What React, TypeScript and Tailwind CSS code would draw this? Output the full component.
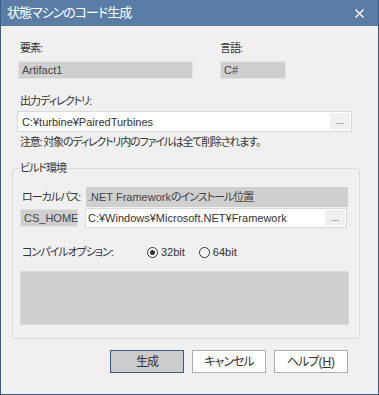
const font = { fontFamily: '"Liberation Sans", "Noto Sans CJK JP", sans-serif' }

function J({ children, className = '' }: { children: React.ReactNode; className?: string }) {
    return <span className={'tracking-[-1px] ' + className}>{children}</span>
}

function Radio({ checked, label }: { checked?: boolean; label: string }) {
    return (
        <div className="flex items-center gap-[3px]">
            <div className="w-[11px] h-[11px] rounded-full border border-[#333] bg-white flex items-center justify-center">
                {checked && <div className="w-[5px] h-[5px] rounded-full bg-[#333]" />}
            </div>
            <span>{label}</span>
        </div>
    )
}

function Browse() {
    return (
        <div className="w-[20px] self-stretch my-[1px] mr-[1px] bg-[#f0f0f0] flex items-center justify-center text-[9px] leading-none text-[#333]">
            ...
        </div>
    )
}

/**
 * State machine code generation dialog
 */
export default function App() {
    return (
        <div
            className="w-[379px] h-[395px] border border-[#3c5b82] border-t-0 bg-[#f0f0f0] flex flex-col text-[11px] leading-[16px] text-[#333] whitespace-nowrap [font-feature-settings:'palt']"
            style={font}
        >
            <div className="h-[26px] bg-[#5a7da6] flex items-center justify-between pl-[6px] pr-[14px] text-white text-[13px]">
                <J>状態マシンのコード生成</J>
                <svg width="9" height="9" viewBox="0 0 9 9" stroke="white" strokeWidth="1.4">
                    <path d="M0.5 0.5 L8.5 8.5 M8.5 0.5 L0.5 8.5" />
                </svg>
            </div>

            <div className="flex flex-col pl-[17px]">
                <div className="flex mt-[14px]">
                    <div className="flex flex-col w-[202px]">
                        <J className="pl-[2px]">要素:</J>
                        <div className="mt-[5px] w-[175px] h-[18px] bg-[#cfcfcf] border border-[#e4e4e4] flex items-center pl-[3px] text-[#444]">
                            Artifact1
                        </div>
                    </div>
                    <div className="flex flex-col">
                        <J>言語:</J>
                        <div className="mt-[5px] w-[66px] h-[18px] bg-[#cfcfcf] border border-[#e4e4e4] flex items-center pl-[3px] text-[#444]">
                            C#
                        </div>
                    </div>
                </div>

                <J className="mt-[14px] pl-[2px]">出力ディレクトリ:</J>
                <div className="mt-[2px] -ml-[1px] w-[335px] h-[21px] bg-white border border-[#d9d9d9] flex items-center">
                    <span className="flex-1 pl-[4px]">C:¥turbine¥PairedTurbines</span>
                    <Browse />
                </div>
                <span className="mt-[2px] pl-[2px] tracking-[-1.2px]">注意: 対象のディレクトリ内のファイルは全て削除されます。</span>
            </div>

            <fieldset className="mt-[10px] ml-[11px] w-[348px] border border-[#dcdcdc] rounded-[3px] pb-[13px]">
                <legend className="ml-[6px] px-[1px]">
                    <J>ビルド環境</J>
                </legend>
                <div className="flex items-center mt-[11px] pl-[9px] h-[20px]">
                    <J className="w-[64px]">ローカルパス:</J>
                    <div className="w-[262px] h-[20px] bg-[#cfcfcf] flex items-center pl-[2px] text-[#444]">
                        .NET Framework<J>のインストール位置</J>
                    </div>
                </div>
                <div className="flex items-center mt-[1px] pl-[7px] h-[20px]">
                    <div className="w-[58px] h-[18px] bg-[#cfcfcf] border border-[#e4e4e4] flex items-center pl-[3px] text-[#444]">
                        CS_HOME
                    </div>
                    <div className="ml-[7px] w-[262px] h-[20px] bg-white border border-[#d9d9d9] flex items-center">
                        <span className="flex-1 pl-[2px]">C:¥Windows¥Microsoft.NET¥Framework</span>
                        <Browse />
                    </div>
                </div>
                <div className="flex items-center mt-[16px] pl-[9px] h-[16px]">
                    <J className="w-[125px]">コンパイルオプション:</J>
                    <div className="flex items-center gap-[14px]">
                        <Radio checked label="32bit" />
                        <Radio label="64bit" />
                    </div>
                </div>
                <div className="mt-[11px] ml-[7px] w-[329px] h-[54px] bg-[#cfcfcf] border border-[#d9d9d9]" />
            </fieldset>

            <div className="flex justify-end gap-[8px] mt-[11px] pr-[30px] text-[12px]">
                <button className="w-[74px] h-[23px] bg-[#cccccc] border border-[#3c5b82]">
                    <J>生成</J>
                </button>
                <button className="w-[74px] h-[23px] bg-white border border-[#adadad]">
                    <J>キャンセル</J>
                </button>
                <button className="w-[74px] h-[23px] bg-white border border-[#adadad]">
                    <J>ヘルプ</J>(<span className="underline">H</span>)
                </button>
            </div>
        </div>
    )
}
